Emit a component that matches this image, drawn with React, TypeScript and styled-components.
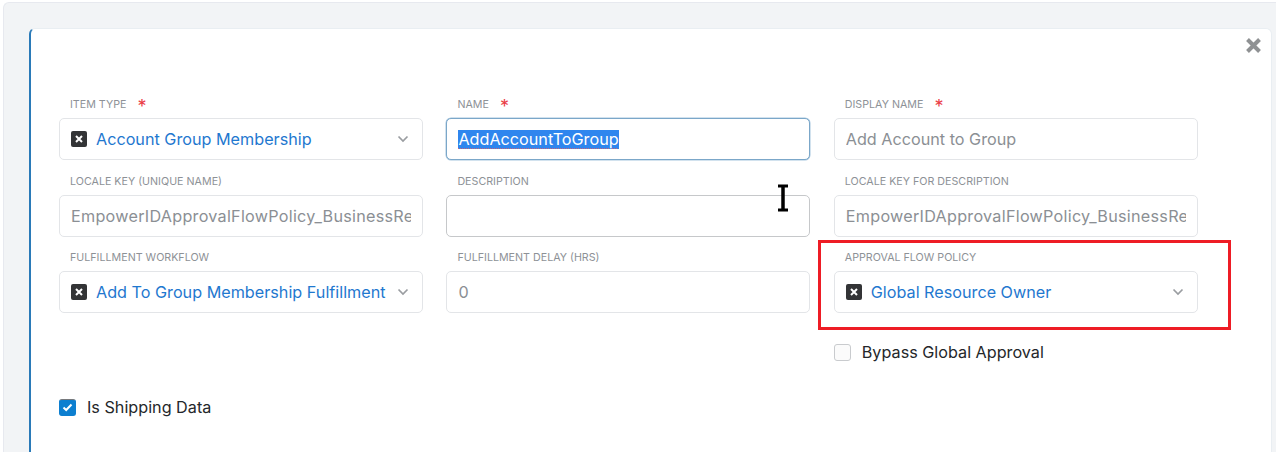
import React from "react";
import styled, { createGlobalStyle } from "styled-components";

const GlobalStyle = createGlobalStyle`
  html, body {
    margin: 0;
    height: 452px;
    overflow: hidden;
    background: #ffffff;
    font-family: Inter, "Liberation Sans", sans-serif;
  }
`;

const Shell = styled.div`
  box-sizing: border-box;
  height: 450px;
  margin: 2px 0 0 3px;
  padding: 25px 4px 0 25px;
  background: #f2f4f6;
  border: 1px solid #e7e9ef;
  border-bottom: none;
  border-right: none;
  border-top-left-radius: 6px;
`;

const Card = styled.div`
  position: relative;
  box-sizing: border-box;
  height: 430px;
  padding: 68.3px 0 0 28px;
  background: #ffffff;
  border: 1px solid #e9eef2;
  border-left: 2px solid #2a7ab8;
  border-radius: 6px 6px 0 6px;
`;

const CloseButton = styled.svg`
  position: absolute;
  top: 8px;
  right: 9px;
  width: 17px;
  height: 17px;
`;

const FormGrid = styled.div`
  display: grid;
  grid-template-columns: repeat(3, 364px);
  column-gap: 23.4px;
  row-gap: 13.5px;
`;

const Field = styled.div`
  display: flex;
  flex-direction: column;
`;

const Label = styled.div`
  display: flex;
  align-items: center;
  height: 16px;
  margin: 0 0 5px 11px;
  font-size: 10.7px;
  line-height: 16px;
  color: #8d9196;
  text-transform: uppercase;
`;

const Required = styled.span`
  margin-left: 11px;
  font-size: 18px;
  line-height: 16px;
  height: 12px;
  color: #ea3c46;
`;

const Box = styled.div<{ $variant?: "focus" | "hover" }>`
  box-sizing: border-box;
  display: flex;
  align-items: center;
  height: 42px;
  padding: 0 11px;
  white-space: nowrap;
  background: #ffffff;
  font-size: 16.2px;
  border-radius: 5px;
  border: 1px solid
    ${(p) =>
      p.$variant === "focus"
        ? "#7ba7c9"
        : p.$variant === "hover"
        ? "#c6c8ca"
        : "#e3e5e8"};
  box-shadow: ${(p) =>
    p.$variant === "focus" ? "0 0 0 0.5px #a5c5de" : "none"};
`;

const Placeholder = styled.span<{ $long?: boolean }>`
  flex: 1;
  overflow: hidden;
  color: #8b8f94;
  letter-spacing: ${(p) => (p.$long ? "0.26px" : "0")};
`;

const Selected = styled.span`
  background: #2f86ee;
  color: #ffffff;
  line-height: 19px;
  text-decoration: underline dotted #c8657a 1px;
  text-underline-offset: 3px;
`;

const SelectValue = styled.span`
  flex: 1;
  margin-left: 9px;
  color: #1f78cf;
`;

const ClearBadge = styled.span`
  display: flex;
  align-items: center;
  justify-content: center;
  flex: none;
  width: 16px;
  height: 16px;
  background: #333436;
  border-radius: 2px;
`;

const ChevronIcon = styled.svg`
  flex: none;
  margin-right: 2px;
`;

const CheckRow = styled.label`
  display: flex;
  align-items: center;
  gap: 11px;
  height: 20px;
  font-size: 16.2px;
  color: #24272a;
`;

const CheckBox = styled.span<{ $checked?: boolean }>`
  box-sizing: border-box;
  display: flex;
  align-items: center;
  justify-content: center;
  width: 17px;
  height: 17px;
  border-radius: 3px;
  background: ${(p) => (p.$checked ? "#0d7fd0" : "#fbfbfb")};
  border: ${(p) => (p.$checked ? "1px solid #0d7fd0" : "1.5px solid #c9cbce")};
  border-top-color: ${(p) => (p.$checked ? "#77797c" : "#c9cbce")};
`;

const BypassSlot = styled.div`
  grid-column: 3;
  margin-top: 15.5px;
`;

const ShippingSlot = styled.div`
  grid-column: 1;
  margin-top: 21.5px;
`;

const Highlight = styled.div`
  position: absolute;
  left: 787px;
  top: 211px;
  box-sizing: border-box;
  width: 413px;
  height: 90px;
  border: 3px solid #ee1c25;
  pointer-events: none;
`;

const TextCursor = styled.svg`
  position: absolute;
  left: 745px;
  top: 154px;
  width: 14px;
  height: 30px;
`;

const Chevron = () => (
  <ChevronIcon width="12" height="8" viewBox="0 0 12 8" fill="none">
    <path d="M1.5 1.5 6 6l4.5-4.5" stroke="#9a9da1" strokeWidth="1.7" />
  </ChevronIcon>
);

const Clear = () => (
  <ClearBadge>
    <svg width="8" height="8" viewBox="0 0 8 8" fill="none">
      <path d="M1 1l6 6M7 1L1 7" stroke="#ffffff" strokeWidth="2" />
    </svg>
  </ClearBadge>
);

const SelectField = ({
  label,
  value,
  required,
}: {
  label: string;
  value: string;
  required?: boolean;
}) => (
  <Field>
    <Label>
      {label}
      {required && <Required>*</Required>}
    </Label>
    <Box>
      <Clear />
      <SelectValue>{value}</SelectValue>
      <Chevron />
    </Box>
  </Field>
);

const TextField = ({
  label,
  placeholder,
  required,
  variant,
  children,
}: {
  label: string;
  placeholder?: string;
  required?: boolean;
  variant?: "focus" | "hover";
  children?: React.ReactNode;
}) => (
  <Field>
    <Label>
      {label}
      {required && <Required>*</Required>}
    </Label>
    <Box $variant={variant}>
      {children ?? <Placeholder>{placeholder}</Placeholder>}
    </Box>
  </Field>
);

export default function App() {
  return (
    <>
      <GlobalStyle />
      <Shell>
        <Card>
          <CloseButton viewBox="0 0 17 17" fill="none">
            <path d="M2.5 2.5l12 12M14.5 2.5l-12 12" stroke="#8f9193" strokeWidth="4" />
          </CloseButton>
          <FormGrid>
            <SelectField label="Item Type" value="Account Group Membership" required />
            <TextField label="Name" required variant="focus">
              <Selected>AddAccountToGroup</Selected>
            </TextField>
            <TextField label="Display Name" placeholder="Add Account to Group" required />
            <TextField label="Locale Key (Unique Name)">
              <Placeholder $long>EmpowerIDApprovalFlowPolicy_BusinessRe</Placeholder>
            </TextField>
            <TextField label="Description" variant="hover">
              {" "}
            </TextField>
            <TextField label="Locale Key for Description">
              <Placeholder $long>EmpowerIDApprovalFlowPolicy_BusinessRe</Placeholder>
            </TextField>
            <SelectField label="Fulfillment Workflow" value="Add To Group Membership Fulfillment" />
            <TextField label="Fulfillment Delay (hrs)" placeholder="0" />
            <SelectField label="Approval Flow Policy" value="Global Resource Owner" />
            <BypassSlot>
              <CheckRow>
                <CheckBox />
                Bypass Global Approval
              </CheckRow>
            </BypassSlot>
            <ShippingSlot>
              <CheckRow>
                <CheckBox $checked>
                  <svg width="11" height="9" viewBox="0 0 11 9" fill="none">
                    <path d="M1.5 4.5 4.2 7 9.5 1.5" stroke="#ffffff" strokeWidth="2" />
                  </svg>
                </CheckBox>
                Is Shipping Data
              </CheckRow>
            </ShippingSlot>
          </FormGrid>
          <Highlight />
          <TextCursor viewBox="0 0 14 30" fill="none">
            <path d="M2 3h10M2 27h10" stroke="#000000" strokeWidth="3" />
            <path d="M7 3v24" stroke="#000000" strokeWidth="3.5" />
          </TextCursor>
        </Card>
      </Shell>
    </>
  );
}
